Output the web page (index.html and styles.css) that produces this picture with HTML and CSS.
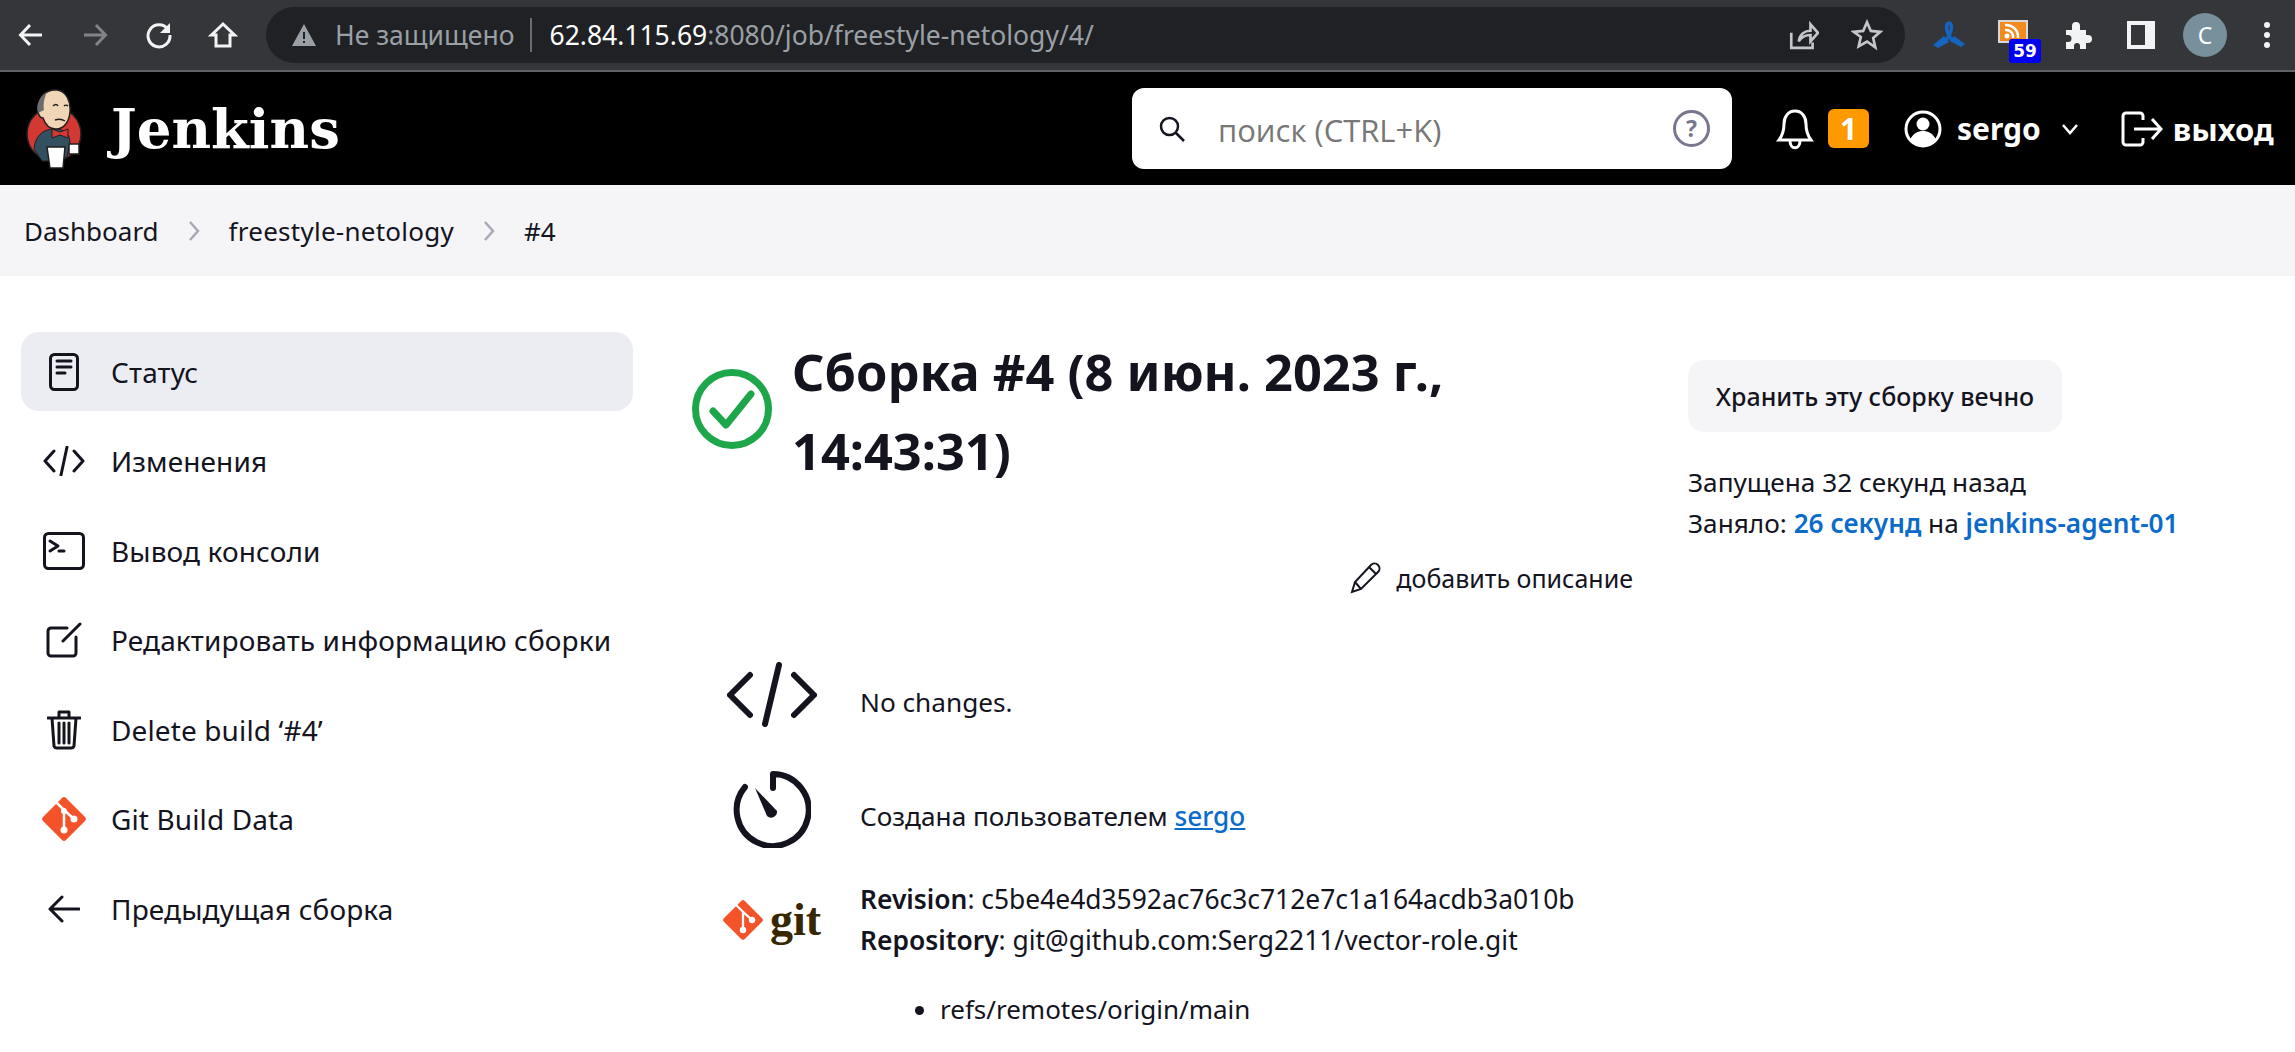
FILE: index.html
```html
<!DOCTYPE html>
<html lang="ru">
	<head>
		<meta charset="utf-8">
		<title>freestyle-netology #4 [Jenkins]</title>
		<link rel="stylesheet" href="styles.css">
	</head>
	<body>
		<div class="toolbar">
			<svg class="tb-icon" viewBox="0 0 30 30"><path d="M26 15H5M14 5 4.500 15 14 25"/></svg>
			<svg class="tb-icon tb-dim" viewBox="0 0 30 30"><path d="M4 15h21M16 5l9.500 10L16 25"/></svg>
			<svg class="tb-icon" viewBox="0 0 30 30"><path d="M24 9.500A11 11 0 1 0 26 15"/><path class="solid" d="M26 3v10H16z"/></svg>
			<svg class="tb-icon" viewBox="0 0 30 30"><path d="M15 4 3.500 15H8v11h14V15h4.500z"/></svg>
			<div class="omnibox">
				<svg class="warn" viewBox="0 0 26 24"><path fill="#9aa0a6" d="M13 1 25 23H1z"/><path fill="#202124" d="M12 9h2v7h-2zM12 18h2v2h-2z"/></svg>
				<span class="insecure">Не защищено</span>
				<span class="url"><b>62.84.115.69</b>:8080/job/freestyle-netology/4/</span>
				<svg class="omni-icon" viewBox="0 0 30 30"><path d="M4 13v14h20v-5M11 21c1-7 6-10 11-10V5l7 8-7 8v-6c-4 0-8 1-11 6z"/></svg>
				<svg class="omni-icon" viewBox="0 0 30 30"><path d="m15 3 3.600 8.200 8.900.800-6.700 5.900 2 8.700L15 21.100l-7.800 4.500 2-8.700L2.500 12l8.900-.8z"/></svg>
			</div>
			<svg class="ribbon" viewBox="0 0 32 28"><path fill="none" stroke="#1565c0" stroke-width="3.500" d="M20 20C13 13 12 3 16 2c4 1 3 11-4 18"/><path fill="#1565c0" d="M11 15 0 24l5 3 11-6zM21 15l11 8-4 3-11-6z"/></svg>
			<div class="rss">
				<svg class="rss-img" viewBox="0 0 30 26"><rect width="30" height="23" fill="#d8d8d8"/><rect x="2" y="2" width="26" height="19" fill="#f28a1e"/><circle cx="9" cy="16" r="2.500" fill="#fff"/><path fill="none" stroke="#fff" stroke-width="2.500" d="M7 10a7 7 0 0 1 8 8M7 5a12 12 0 0 1 13 13"/></svg>
				<span class="rss-count">59</span>
			</div>
			<svg class="puzzle" viewBox="0 0 30 28"><path fill="#f1f3f4" d="M3 9h6V5a4 4 0 0 1 8 0v4h6v5h2a4 4 0 0 1 0 8h-2v6h-6v-3a3 3 0 0 0-6 0v3H3v-7h2a3.500 3.500 0 0 0 0-7H3z"/></svg>
			<div class="side-toggle"></div>
			<div class="avatar">C</div>
			<div class="dots"><i></i><i></i><i></i></div>
		</div>

		<header class="page-header">
			<svg class="butler" viewBox="0 0 56 80">
				<circle cx="28" cy="45" r="27" fill="#d33833" stroke="#231f20" stroke-width="1.500"/>
				<path fill="#335061" stroke="#231f20" d="M8 60c1-12 8-20 20-20s16 6 16 14l-3 14-10 4H16z"/>
				<path fill="#f0d6b7" stroke="#231f20" stroke-width="1.500" d="M13 20C12 6 22 0 31 1c9 1 14 11 13 22-1 10-6 17-14 17-7 0-11-5-13-11-3 0-6-4-4-9z"/>
				<path fill="#6d6b6d" d="M12 24c-3-9 3-18 9-21-3 6-4 13-3 18z"/>
				<path fill="none" stroke="#231f20" stroke-width="1.500" d="M27 17c2-2 4-2 5 0M38 17c1-1 3-1 4 0M29 31c3-1 7-1 10 1"/>
				<path fill="#d33833" stroke="#231f20" d="m26 40 8 3 8-3v9l-8-3-8 3z"/>
				<path fill="#fff" stroke="#231f20" stroke-width="1.500" d="M21 58h18l-2 21H24z"/>
				<path fill="#fff" stroke="#231f20" stroke-width="1.500" d="M43 55h10v10H43z"/>
			</svg>
			<span class="brand">Jenkins</span>
			<div class="search">
				<svg class="search-glass" viewBox="0 0 28 28"><circle cx="11.500" cy="11.500" r="8.500"/><path d="m18 18 8 8"/></svg>
				<span class="search-text">поиск (CTRL+K)</span>
				<span class="search-help">?</span>
			</div>
			<svg class="bell" viewBox="0 0 38 42"><path d="M19 3c-7 0-11 6-11 13 0 8-2 12-5 16h32c-3-4-5-8-5-16 0-7-4-13-11-13zM14 33c0 9 10 9 10 0"/></svg>
			<span class="alert-count">1</span>
			<svg class="user" viewBox="0 0 38 38"><circle class="line" cx="19" cy="19" r="17"/><circle class="fill" cx="19" cy="14" r="6.500"/><path class="fill" d="M6 30c3-7 8-9 13-9s10 2 13 9c-7 7-19 7-26 0z"/></svg>
			<span class="user-name">sergo</span>
			<svg class="chevron" viewBox="0 0 18 12"><path d="m2 2 7 8 7-8"/></svg>
			<svg class="logout" viewBox="0 0 42 36"><path d="M22 9V5a3 3 0 0 0-3-3H5a3 3 0 0 0-3 3v26a3 3 0 0 0 3 3h14a3 3 0 0 0 3-3v-4M13 18h27M31 8l9 10-9 10"/></svg>
			<span class="logout-text">выход</span>
		</header>

		<nav class="crumbs">
			<a>Dashboard</a>
			<svg viewBox="0 0 12 22"><path d="m2 2 8 9-8 9"/></svg>
			<a class="crumb-job">freestyle-netology</a>
			<svg viewBox="0 0 12 22"><path d="m2 2 8 9-8 9"/></svg>
			<a>#4</a>
		</nav>

		<div class="content">
			<aside class="tasks">
				<a class="task task-active">
					<span class="task-icon"><svg width="30" height="38" viewBox="0 0 30 38"><rect x="1.500" y="1.500" width="27" height="35" rx="4"/><path d="M8 8h14M8 14h14M8 20h8"/></svg></span>
					Статус
				</a>
				<a class="task">
					<span class="task-icon"><svg width="42" height="30" viewBox="0 0 42 30"><path d="M11 5 2 15l9 10M31 5l9 10-9 10M24 1l-6 28"/></svg></span>
					Изменения
				</a>
				<a class="task">
					<span class="task-icon"><svg width="42" height="38" viewBox="0 0 42 38"><rect x="1.500" y="1.500" width="39" height="35" rx="4"/><path d="m7 9 8 5-8 5M16 19h5"/></svg></span>
					Вывод консоли
				</a>
				<a class="task">
					<span class="task-icon"><svg width="36" height="36" viewBox="0 0 36 36"><path d="M21 6H5a3 3 0 0 0-3 3v22a3 3 0 0 0 3 3h22a3 3 0 0 0 3-3V15M17 19 34 2"/></svg></span>
					Редактировать информацию сборки
				</a>
				<a class="task">
					<span class="task-icon"><svg width="34" height="40" viewBox="0 0 34 40"><path d="M1 8h32M12 7V2h10v5M5 8l2 28a3 3 0 0 0 3 2h14a3 3 0 0 0 3-2l2-28M12 13v20M17 13v20M22 13v20"/></svg></span>
					Delete build ‘#4’
				</a>
				<a class="task">
					<span class="task-icon"><svg width="44" height="44" viewBox="0 0 44 44"><path fill="#f4532a" stroke="none" d="M20 1 1 20a3 3 0 0 0 0 4l19 19a3 3 0 0 0 4 0l19-19a3 3 0 0 0 0-4L24 1a3 3 0 0 0-4 0z"/><path class="git-lines" d="m15 6 7 7v20M22 13l10 9"/><circle class="git-dots" cx="22" cy="33" r="3.500"/><circle class="git-dots" cx="32" cy="22" r="3.500"/><circle class="git-dots" cx="22" cy="14" r="3"/></svg></span>
					Git Build Data
				</a>
				<a class="task">
					<span class="task-icon"><svg width="32" height="28" viewBox="0 0 32 28"><path d="M31 14H2M14 2 2 14l12 12"/></svg></span>
					Предыдущая сборка
				</a>
			</aside>

			<main class="build">
				<div class="build-head">
					<svg class="build-ok" viewBox="0 0 80 80"><circle cx="40" cy="40" r="36.500"/><path d="m21 42 13 14 25-31"/></svg>
					<h1 class="build-title">Сборка #4 (8 июн. 2023 г., 14:43:31)</h1>
				</div>
				<div class="describe">
					<svg viewBox="0 0 32 32"><path d="M2 30l3-10L21 3c2-2 5-2 7 0s2 5 0 7L11 27zM5 20l6 7M19 5l7 7"/></svg>
					<span>добавить описание</span>
				</div>
				<div class="info-row info-changes">
					<span class="info-icon"><svg width="90" height="65" viewBox="0 0 90 65"><path d="M23 13 3 33l20 20M67 13l20 20-20 20M52 3 38 62"/></svg></span>
					<span class="info-text">No changes.</span>
				</div>
				<div class="info-row info-cause">
					<span class="info-icon"><svg width="78" height="78" viewBox="0 0 78 78"><path d="M12 17a36 36 0 1 0 28-13v14"/><path class="solid" d="m22 18 22 23a6 6 0 0 1-10 5z"/></svg></span>
					<span class="info-text">Создана пользователем <a class="link">sergo</a></span>
				</div>
				<div class="info-row info-git">
					<span class="info-icon git-logo">
						<svg width="40" height="40" viewBox="0 0 44 44"><path fill="#f4532a" stroke="none" d="M20 1 1 20a3 3 0 0 0 0 4l19 19a3 3 0 0 0 4 0l19-19a3 3 0 0 0 0-4L24 1a3 3 0 0 0-4 0z"/><path class="git-lines" d="m15 6 7 7v20M22 13l10 9"/><circle class="git-dots" cx="22" cy="33" r="3.500"/><circle class="git-dots" cx="32" cy="22" r="3.500"/></svg>
						<span class="git-word">git</span>
					</span>
					<div class="git-lines-text">
						<div><b>Revision</b>: c5be4e4d3592ac76c3c712e7c1a164acdb3a010b</div>
						<div><b>Repository</b>: git@github.com:Serg2211/vector-role.git</div>
					</div>
				</div>
				<ul class="branches">
					<li>refs/remotes/origin/main</li>
				</ul>
			</main>

			<aside class="build-side">
				<div class="keep">Хранить эту сборку вечно</div>
				<div class="timing">
					<div>Запущена 32 секунд назад</div>
					<div>Заняло: <a class="strong-link">26 секунд</a> на <a class="strong-link">jenkins-agent-01</a></div>
				</div>
			</aside>
		</div>
	</body>
</html>
```

FILE: styles.css
```css
* {
	box-sizing: border-box;
	padding: 0;
	margin: 0;
}
html, body {
	height: 1052px;
	overflow: hidden;
}
body {
	background-color: white;
	color: #14141f;
	font-family: "Noto Sans", sans-serif;
	font-size: 26px;
}
svg {
	display: block;
	flex: none;
}

/* browser chrome */
.toolbar {
	display: flex;
	align-items: center;
	height: 72px;
	padding-left: 16px;
	background-color: #35363a;
	border-bottom: 2px solid #5f6368;
}
.toolbar > * {
	flex: none;
}
.tb-icon {
	width: 30px;
	height: 30px;
	margin-right: 34px;
	fill: none;
	stroke: #f1f3f4;
	stroke-width: 3;
}
.tb-icon .solid {
	fill: #f1f3f4;
	stroke: none;
}
.tb-dim {
	stroke: #808488;
}
.omnibox {
	display: flex;
	align-items: center;
	width: 1639px;
	height: 56px;
	margin-left: -6px;
	margin-right: 28px;
	padding: 0 22px 0 25px;
	background-color: #202124;
	border-radius: 28px;
}
.warn {
	width: 26px;
	height: 24px;
	margin-right: 18px;
}
.insecure {
	padding-right: 16px;
	border-right: 2px solid #6a6d71;
	line-height: 34px;
	color: #9aa0a6;
	font-size: 26.500px;
}
.url {
	flex: 1;
	padding-left: 17px;
	color: #9aa0a6;
	font-size: 26.500px;
}
.url b {
	color: white;
	font-weight: normal;
}
.omni-icon {
	width: 32px;
	height: 32px;
	margin-left: 32px;
	fill: none;
	stroke: #c4c7c9;
	stroke-width: 2.500;
}
.ribbon {
	width: 32px;
	height: 28px;
}
.rss {
	position: relative;
	width: 30px;
	height: 26px;
	margin-left: 33px;
	margin-top: -4px;
}
.rss-img {
	width: 30px;
	height: 26px;
}
.rss-count {
	position: absolute;
	left: 11px;
	top: 19px;
	width: 32px;
	height: 24px;
	background-color: #0000f0;
	border-radius: 3px;
	color: white;
	font-family: "DejaVu Sans", sans-serif;
	font-size: 17px;
	font-weight: bold;
	line-height: 24px;
	text-align: center;
}
.puzzle {
	width: 30px;
	height: 28px;
	margin-left: 35px;
}
.side-toggle {
	width: 28px;
	height: 28px;
	margin-left: 34px;
	background-color: #35363a;
	border: solid #f1f3f4;
	border-width: 4px 10px 4px 4px;
}
.avatar {
	width: 44px;
	height: 44px;
	margin-left: 28px;
	background-color: #78909c;
	border-radius: 50%;
	color: white;
	font-size: 23px;
	line-height: 44px;
	text-align: center;
}
.dots {
	display: flex;
	flex-direction: column;
	gap: 4px;
	margin-left: 37px;
}
.dots i {
	display: block;
	width: 6px;
	height: 6px;
	background-color: #f1f3f4;
	border-radius: 50%;
}

/* jenkins header */
.page-header {
	display: flex;
	align-items: center;
	height: 113px;
	padding-left: 26px;
	background-color: black;
	color: white;
}
.butler {
	width: 56px;
	height: 80px;
}
.brand {
	width: 235px;
	margin-left: 29px;
	margin-right: 786px;
	font-family: "DejaVu Serif", serif;
	font-size: 54.500px;
	font-weight: bold;
	line-height: 60px;
	white-space: nowrap;
}
.search {
	display: flex;
	align-items: center;
	width: 600px;
	height: 81px;
	padding: 0 22px 0 26px;
	background-color: white;
	border-radius: 12px;
}
.search-glass {
	width: 28px;
	height: 28px;
	margin-right: 32px;
	fill: none;
	stroke: #14141f;
	stroke-width: 2.500;
}
.search-text {
	flex: 1;
	padding-top: 2px;
	color: #777;
	font-size: 31px;
	font-family: "Open Sans", sans-serif;
}
.search-help {
	width: 37px;
	height: 37px;
	border: 3px solid #777790;
	border-radius: 50%;
	color: #777790;
	font-size: 23px;
	font-weight: bold;
	line-height: 31px;
	text-align: center;
}
.bell {
	width: 38px;
	height: 42px;
	margin-left: 44px;
	fill: none;
	stroke: white;
	stroke-width: 3;
}
.alert-count {
	width: 41px;
	height: 39px;
	margin-left: 14px;
	background-color: #fe9a00;
	border-radius: 6px;
	font-size: 30px;
	font-weight: bold;
	line-height: 39px;
	text-align: center;
}
.user {
	width: 38px;
	height: 38px;
	margin-left: 35px;
}
.user .line {
	fill: none;
	stroke: white;
	stroke-width: 3;
}
.user .fill {
	fill: white;
}
.user-name {
	margin-left: 15px;
	font-size: 30px;
	font-weight: bold;
}
.chevron {
	width: 18px;
	height: 12px;
	margin-left: 20px;
	fill: none;
	stroke: white;
	stroke-width: 2.500;
}
.logout {
	width: 42px;
	height: 36px;
	margin-left: 42px;
	fill: none;
	stroke: white;
	stroke-width: 3;
}
.logout-text {
	margin-left: 10px;
	font-size: 31px;
	font-weight: bold;
}

/* breadcrumbs */
.crumbs {
	display: flex;
	align-items: center;
	gap: 29px;
	height: 91px;
	padding-left: 24px;
	background-color: #f5f5f7;
}
.crumbs svg {
	width: 12px;
	height: 22px;
	fill: none;
	stroke: #a8a8b8;
	stroke-width: 2.500;
}
.crumb-job {
	letter-spacing: .25px;
}

/* page body */
.content {
	display: flex;
	padding-top: 56px;
	padding-left: 21px;
}
.tasks {
	display: flex;
	flex-direction: column;
	gap: 10.500px;
	width: 612px;
	margin-right: 59px;
	font-size: 28px;
	letter-spacing: .12px;
}
.task {
	display: flex;
	align-items: center;
	gap: 24px;
	height: 79px;
	padding-left: 20px;
	border-radius: 18px;
}
.task-active {
	background-color: #ecedf2;
}
.task-icon {
	display: flex;
	align-items: center;
	justify-content: center;
	width: 46px;
}
.task-icon svg, .info-icon svg {
	fill: none;
	stroke: #14141f;
	stroke-width: 3;
	stroke-linecap: round;
	stroke-linejoin: round;
}
.git-lines {
	stroke: white !important;
	stroke-width: 2.500 !important;
}
.git-dots {
	fill: white;
	stroke: none !important;
}

.build {
	flex: none;
	width: 941px;
	margin-right: 55px;
}
.build-head {
	display: flex;
	gap: 20px;
}
.build-ok {
	width: 80px;
	height: 80px;
	margin-top: 37px;
	fill: none;
	stroke: #1ea64b;
	stroke-width: 7;
	stroke-linecap: round;
	stroke-linejoin: round;
}
.build-title {
	font-size: 50.500px;
	font-weight: bold;
	line-height: 79px;
}
.describe {
	display: flex;
	align-items: center;
	justify-content: flex-end;
	gap: 14px;
	height: 40px;
	margin-top: 68px;
	font-size: 25px;
}
.describe svg {
	width: 32px;
	height: 32px;
	fill: none;
	stroke: #14141f;
	stroke-width: 2;
}
.info-row {
	display: flex;
	align-items: center;
	gap: 38px;
	padding-left: 30px;
}
.info-icon {
	display: flex;
	align-items: center;
	justify-content: center;
	width: 100px;
}
.info-icon svg {
	stroke-width: 6;
}
.info-icon .solid {
	fill: #14141f;
	stroke: none;
}
.info-changes {
	margin-top: 64px;
}
.info-cause {
	margin-top: 43px;
}
.info-git {
	margin-top: 31px;
}
.info-text {
	padding-top: 14px;
	font-size: 26.200px;
}
.link {
	color: #0b6bcb;
	font-weight: 500;
	text-decoration: underline;
}
.git-logo {
	gap: 7px;
}
.git-word {
	color: #362701;
	font-family: "Liberation Serif", serif;
	font-size: 46px;
	font-weight: bold;
	line-height: 40px;
}
.git-lines-text {
	font-size: 26.400px;
	line-height: 41px;
}
.git-lines-text b {
	font-weight: 600;
}
.branches {
	margin-top: 28px;
	margin-left: 248px;
	line-height: 41px;
}
.build-side {
	padding-top: 28px;
}
.keep {
	width: 374px;
	height: 72px;
	background-color: #f5f5f7;
	border-radius: 16px;
	font-size: 25px;
	font-weight: 500;
	line-height: 72px;
	text-align: center;
}
.timing {
	margin-top: 30px;
	font-size: 26.200px;
	line-height: 41px;
}
.strong-link {
	color: #0b6bcb;
	font-weight: 600;
}
```
